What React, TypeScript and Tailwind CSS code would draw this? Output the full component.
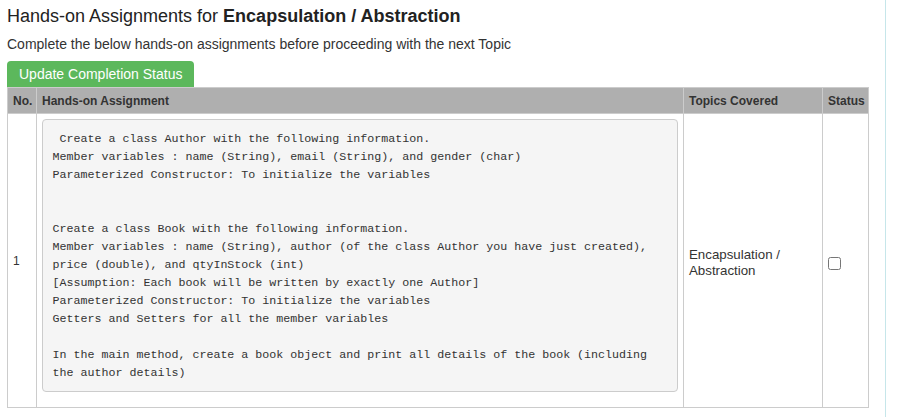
import React from "react";

const lines: string[] = [
	" Create a class Author with the following information.",
	"Member variables : name (String), email (String), and gender (char)",
	"Parameterized Constructor: To initialize the variables",
	"",
	"",
	"Create a class Book with the following information.",
	"Member variables : name (String), author (of the class Author you have just created),",
	"price (double), and qtyInStock (int)",
	"[Assumption: Each book will be written by exactly one Author]",
	"Parameterized Constructor: To initialize the variables",
	"Getters and Setters for all the member variables",
	"",
	"In the main method, create a book object and print all details of the book (including",
	"the author details)",
];

const App: React.FC = () => {
	return (
		<div className="flex h-[417px] w-[898px] overflow-hidden bg-white text-[#333] font-['Liberation_Sans',Arial,sans-serif]">
			<div className="w-[885px] pl-[7px] pr-[16px]">
				<h3 className="pt-[5px] text-[18px] leading-[22px] text-[#222]">
					Hands-on Assignments for <b>Encapsulation / Abstraction</b>
				</h3>
				<p className="mt-[8px] text-[14px] leading-[18px]">
					Complete the below hands-on assignments before proceeding with the next Topic
				</p>
				<button className="mt-[8px] block h-[26px] rounded-t-[4px] bg-[#5cb85c] px-[12px] text-[14px] leading-[26px] text-white">
					Update Completion Status
				</button>
				<table className="w-[862px] table-fixed border-collapse text-[12px]">
					<thead>
						<tr className="h-[26px] bg-[#afafaf] text-left">
							<th className="w-[29px] border border-[#ccc] pl-[5px] pr-0 font-bold">No.</th>
							<th className="w-[647px] border border-[#ccc] px-[5px] font-bold">Hands-on Assignment</th>
							<th className="w-[139px] border border-[#ccc] px-[5px] font-bold">Topics Covered</th>
							<th className="border border-[#ccc] px-[5px] font-bold">Status</th>
						</tr>
					</thead>
					<tbody>
						<tr>
							<td className="border border-[#ccc] px-[5px] align-middle">1</td>
							<td className="border border-[#ccc] px-[5px] pt-[5px] pb-[15px] align-top">
								<pre className="rounded-[4px] border border-[#ccc] bg-[#f5f5f5] pl-[9.5px] pr-[10px] pt-[10px] pb-[9px] font-['Liberation_Mono',monospace] text-[11.66px] leading-[18px] text-[#333]">
									{lines.join("\n")}
								</pre>
							</td>
							<td className="border border-[#ccc] px-[5px] pt-[4px] align-middle text-[13.3px] leading-[16px]">
								Encapsulation /<br />
								Abstraction
							</td>
							<td className="border border-[#ccc] px-[5px] pt-[5px] align-middle">
								<input type="checkbox" className="block h-[13px] w-[13px]" />
							</td>
						</tr>
					</tbody>
				</table>
			</div>
			<div className="flex-1 border-l border-[#c6e6ea]" />
		</div>
	);
};

export default App;
